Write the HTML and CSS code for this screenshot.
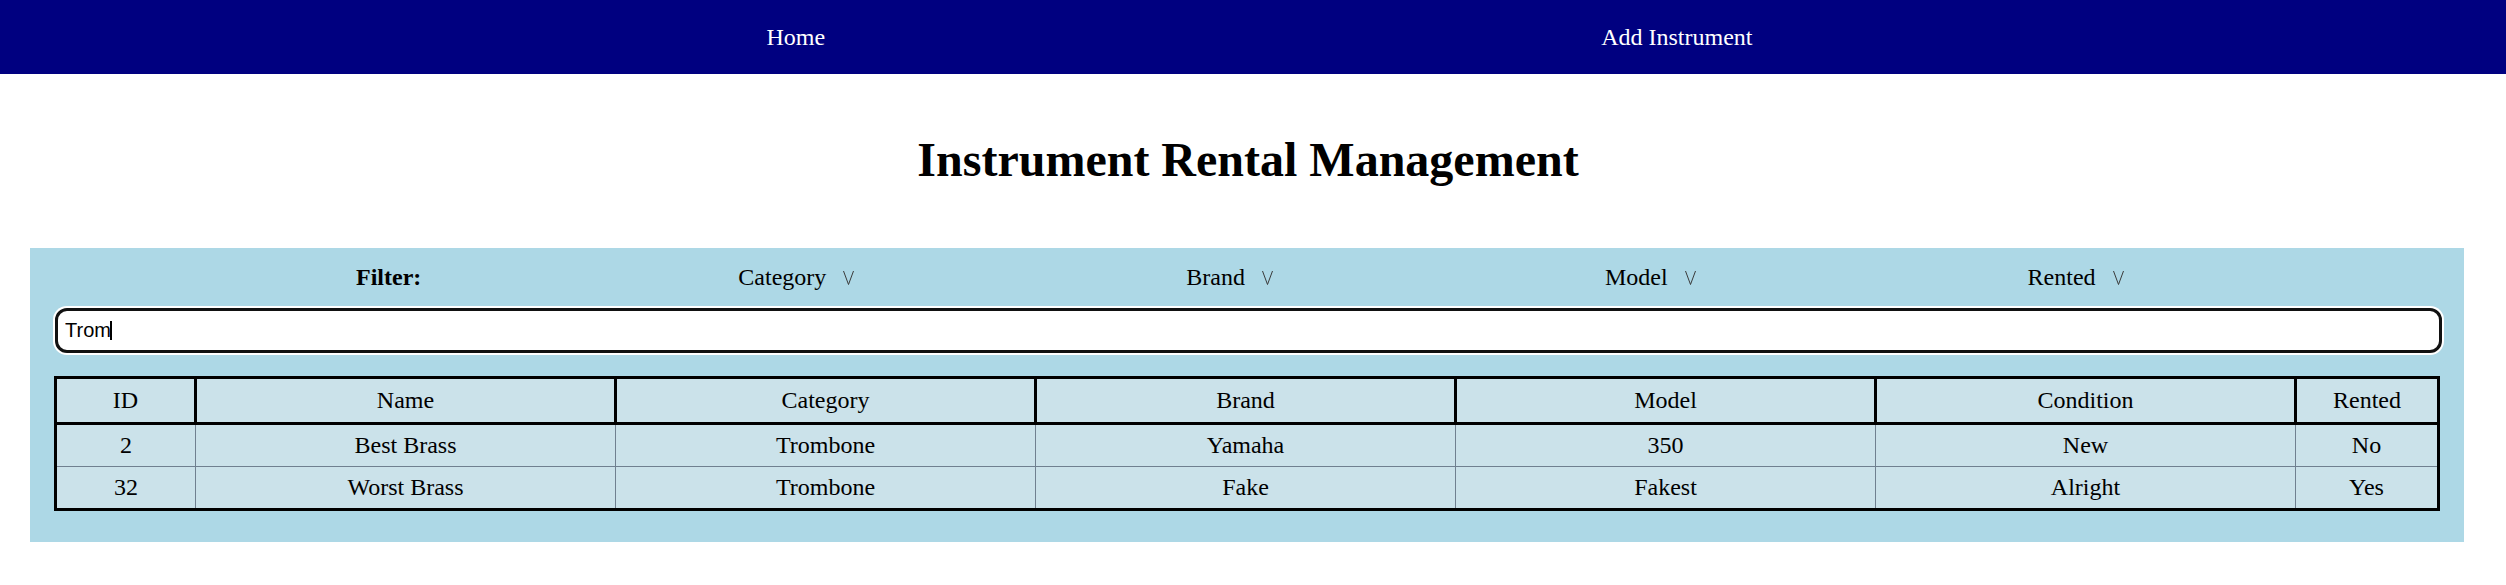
FILE: index.html
```html
<!DOCTYPE html>
<html lang="en">
<head>
<meta charset="utf-8">
<title>Instrument Rental Management</title>
<link rel="stylesheet" href="styles.css">
</head>
<body>
<nav class="topnav">
  <a class="nav-link" href="#">Home</a>
  <a class="nav-link" href="#">Add Instrument</a>
</nav>
<h1 class="page-title">Instrument Rental Management</h1>
<section class="panel">
  <div class="filters">
    <span class="filter-label">Filter:</span>
    <div class="filter-select"><span>Category</span><svg class="chev" width="11" height="14" viewBox="0 0 11 14"><polyline points="0.5,0 5.5,13.5 10.5,0" fill="none" stroke="#3a3a3a" stroke-width="1"/></svg></div>
    <div class="filter-select"><span>Brand</span><svg class="chev" width="11" height="14" viewBox="0 0 11 14"><polyline points="0.5,0 5.5,13.5 10.5,0" fill="none" stroke="#3a3a3a" stroke-width="1"/></svg></div>
    <div class="filter-select"><span>Model</span><svg class="chev" width="11" height="14" viewBox="0 0 11 14"><polyline points="0.5,0 5.5,13.5 10.5,0" fill="none" stroke="#3a3a3a" stroke-width="1"/></svg></div>
    <div class="filter-select"><span>Rented</span><svg class="chev" width="11" height="14" viewBox="0 0 11 14"><polyline points="0.5,0 5.5,13.5 10.5,0" fill="none" stroke="#3a3a3a" stroke-width="1"/></svg></div>
  </div>
  <div class="search">
    <input class="search-input" type="text" value="Trom">
    <span class="caret"></span>
  </div>
  <table class="inv">
    <colgroup>
      <col class="c-id">
      <col class="c-wide">
      <col class="c-wide">
      <col class="c-wide">
      <col class="c-wide">
      <col class="c-wide">
      <col>
    </colgroup>
    <thead>
      <tr><th>ID</th><th>Name</th><th>Category</th><th>Brand</th><th>Model</th><th>Condition</th><th>Rented</th></tr>
    </thead>
    <tbody>
      <tr><td>2</td><td>Best Brass</td><td>Trombone</td><td>Yamaha</td><td>350</td><td>New</td><td>No</td></tr>
      <tr><td>32</td><td>Worst Brass</td><td>Trombone</td><td>Fake</td><td>Fakest</td><td>Alright</td><td>Yes</td></tr>
    </tbody>
  </table>
</section>
</body>
</html>
```

FILE: styles.css
```css
html, body {
  margin: 0;
  padding: 0;
  background: #ffffff;
}

body {
  font-family: "Liberation Serif", "Times New Roman", serif;
  font-size: 24px;
  color: #000;
}

.topnav {
  height: 74px;
  background: #000080;
  display: flex;
  align-items: center;
  justify-content: center;
  gap: 776px;
  padding-left: 13px;
}

.nav-link {
  color: #ffffff;
  text-decoration: none;
  font-size: 24px;
  line-height: 28px;
}

.page-title {
  margin: 58px 0 60px;
  padding-right: 10px;
  font-size: 48px;
  line-height: 56px;
  font-weight: bold;
  text-align: center;
}

.panel {
  margin: 0 42px 0 30px;
  background: #add8e6;
  padding: 15px 24px 31px;
}

.filters {
  display: flex;
  align-items: baseline;
  gap: 332px;
  padding-left: 302px;
  line-height: 28px;
  height: 28px;
}

.filter-label {
  font-weight: bold;
  margin-right: -15px;
}

.filter-select {
  display: flex;
  align-items: baseline;
  gap: 17px;
}

.chev {
  display: block;
}

.search {
  position: relative;
  margin-top: 17px;
}

.search-input {
  display: block;
  box-sizing: border-box;
  width: 2387px;
  height: 45px;
  margin-left: 1px;
  border: 3px solid #111;
  border-radius: 12px;
  background: #fff;
  box-shadow: 0 0 0 2px #ffffff;
  padding: 0 7px;
  font-family: "Liberation Sans", Arial, sans-serif;
  font-size: 20px;
  color: #000;
  outline: none;
}

.caret {
  position: absolute;
  left: 56px;
  top: 13px;
  width: 1.5px;
  height: 19px;
  background: #000;
}

.inv {
  margin-top: 23px;
  width: 100%;
  table-layout: fixed;
  border-collapse: collapse;
  border: 3px solid #000;
  background: #cbe2ea;
  font-size: 24px;
  line-height: 27px;
  text-align: center;
}

.c-id { width: 140px; }
.c-wide { width: 420px; }

.inv th {
  font-weight: normal;
  border: 3px solid #000;
  padding: 8px 0;
}

.inv td {
  border: 1px solid #708090;
  padding: 7px 0;
}
```
